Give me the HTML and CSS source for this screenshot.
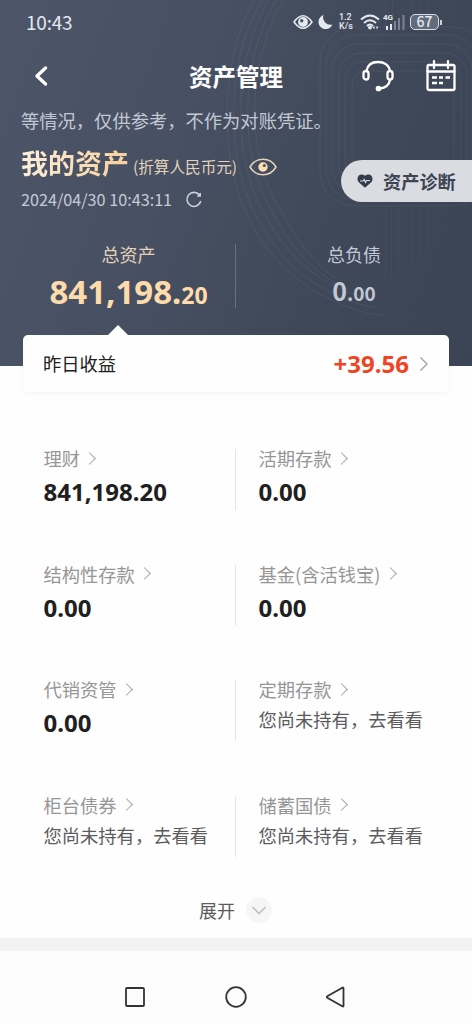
FILE: index.html
```html
<!DOCTYPE html>
<html lang="zh-CN">
<head>
<meta charset="utf-8">
<title>资产管理</title>
<link rel="stylesheet" href="styles.css">
</head>
<body>
<header class="hero">
  <svg class="hero-lines" width="472" height="366" viewBox="0 0 472 366" fill="none" stroke="#8592a5">
    <g stroke-opacity=".14">
      <path d="M255 0C222 50 215 160 252 225C280 276 330 309 386 316"/>
      <path d="M262 0C228 52 222 158 259 221C286 270 327 300 378 308"/>
      <path d="M269 0C235 54 229 156 266 217C290 260 322 286 365 298"/>
      <path d="M276 0C242 56 236 154 273 213C293 250 316 276 350 290"/>
      <path d="M283 0C249 58 243 152 280 209C298 242 314 264 338 280"/>
    </g>
    <g stroke-opacity=".13">
      <rect x="320" y="27" width="166" height="179" rx="34"/>
      <rect x="326" y="35" width="152" height="165" rx="30"/>
      <rect x="332" y="44" width="140" height="150" rx="26"/>
      <rect x="339" y="53" width="128" height="134" rx="22"/>
      <rect x="345" y="62" width="116" height="119" rx="18"/>
      <rect x="352" y="71" width="102" height="103" rx="14"/>
    </g>
    <path stroke-opacity=".08" d="M385.500 206V278M391.500 206V276M398.500 206V272M412.500 206V262M420.500 206V255M427.500 206V250M385.500 0V27M392.500 0V27M412.500 0V27M420.500 0V27M427.500 0V27"/>
  </svg>

  <div class="status">
    <span class="clock">10:43</span>
    <svg class="status-eye" width="20" height="16" viewBox="0 0 20 16"><path d="M1 8Q10-4.500 19 8Q10 20.500 1 8Z" fill="none" stroke="#e5e9f0" stroke-width="1.600"/><circle cx="10" cy="8" r="4.900" fill="#e5e9f0"/><circle cx="8.700" cy="6.800" r="1.700" fill="#485264"/></svg>
    <svg class="moon" width="15" height="16" viewBox="0 0 15 16"><path d="M5.500 1A7.200 7.200 0 1 0 14.400 10.500A7.400 7.400 0 0 1 5.500 1Z" fill="#e5e9f0"/></svg>
    <span class="speed"><span>1.2</span><span>K/s</span></span>
    <svg class="wifi" width="20" height="16" viewBox="0 0 20 16" fill="none" stroke="#e5e9f0" stroke-width="1.900"><path d="M1 5.500Q10-2.500 19 5.500M4 9Q10 3.500 16 9M6.800 12Q10 9.200 13 12"/><circle cx="10" cy="13.600" r="2" fill="#e5e9f0" stroke="none"/><path d="M12.500 13.500L14.500 11.700V15.300ZM18.500 13.500L16.500 11.700V15.300Z" fill="#e5e9f0" stroke="none"/></svg>
    <span class="signal"><span class="network">4G</span><svg width="22" height="16" viewBox="0 0 22 16" stroke-width="2"><path stroke="#e5e9f0" d="M4 12V16M8 10V16"/><path stroke="#7b8494" d="M12 7V16M16 4V16M20.500 1V16"/></svg></span>
    <span class="battery">67</span><i class="battery-tip"></i>
  </div>

  <div class="navbar">
    <svg class="back" width="14" height="20" viewBox="0 0 14 20"><path d="M11.500 2L3 10L11.500 18" fill="none" stroke="#fff" stroke-width="3.300" stroke-linecap="round" stroke-linejoin="round"/></svg>
    <h1>资产管理</h1>
    <svg class="headset" width="34" height="34" viewBox="0 0 34 34" fill="none" stroke="#fff" stroke-width="2.300" stroke-linecap="round"><path d="M5.500 12C6.500 6 11 3 17 3S28 6 29 12"/><rect x="2.500" y="12" width="5" height="8.500" rx="2.500"/><rect x="26.500" y="12" width="5" height="8.500" rx="2.500"/><path d="M29 21C28 26 24 29 19 29.500"/><circle cx="17.500" cy="29.500" r="1.700" fill="#fff"/></svg>
    <svg class="calendar" width="30" height="32" viewBox="0 0 30 32" fill="none" stroke="#fff" stroke-width="2.300"><rect x="1.500" y="5" width="27" height="25" rx="1.500"/><path d="M1.500 11.500H28.500M8 1V8M22 1V8" stroke-linecap="round"/><path d="M6 17.500H11M13 17.500H17M19.500 17.500H24M6 23H11M13 23H17"/></svg>
  </div>

  <p class="notice">等情况，仅供参考，不作为对账凭证。</p>
  <div class="asset-title">
    <h2>我的资产</h2><span class="unit">(折算人民币元)</span>
    <svg width="28" height="20" viewBox="0 0 28 20"><path d="M1 10C7 -.3 21 -.3 27 10C21 20.300 7 20.300 1 10Z" fill="none" stroke="#e6d3bb" stroke-width="1.500"/><circle cx="14" cy="10" r="4.700" fill="#ffdfaf"/><circle cx="15.300" cy="8.600" r="1.500" fill="#465062"/></svg>
  </div>
  <div class="updated"><span>2024/04/30 10:43:11</span>
    <svg width="18" height="18" viewBox="0 0 18 18"><path d="M14.800 4.500A7 7 0 1 0 15.800 10M15.200 2V5H12.200" fill="none" stroke="#cbd0da" stroke-width="1.600"/></svg>
  </div>
  <a class="diagnosis"><svg width="16" height="14" viewBox="0 0 16 14"><path d="M8 13.800L1.500 8C-1.500 4 2.500 -2 8 1.800C13.500-2 17.500 4 14.500 8Z" fill="#343b4b"/><path d="M3 7H6L7.200 5.500L8.500 8.500L9.700 6.500H13" fill="none" stroke="#dadce2" stroke-width="1.200"/></svg><span>资产诊断</span></a>

  <div class="totals">
    <div class="total total-assets"><span class="total-label">总资产</span><strong>841,198.<small>20</small></strong></div>
    <div class="total total-debt"><span class="total-label">总负债</span><strong>0<small>.00</small></strong></div>
  </div>
</header>

<main>
  <section class="income">
    <span class="income-label">昨日收益</span><strong>+39.56</strong>
    <svg width="10" height="16" viewBox="0 0 10 16"><path d="M1.500 1.500L8 8L1.500 14.500" fill="none" stroke="#a0a0a0" stroke-width="1.300"/></svg>
  </section>
  <section class="grid">
    <div class="item"><span class="name">理财<i></i></span><strong>841,198.20</strong></div>
    <div class="item"><span class="name">活期存款<i></i></span><strong>0.00</strong></div>
    <div class="item"><span class="name">结构性存款<i></i></span><strong>0.00</strong></div>
    <div class="item"><span class="name">基金(含活钱宝)<i></i></span><strong>0.00</strong></div>
    <div class="item"><span class="name">代销资管<i></i></span><strong>0.00</strong></div>
    <div class="item"><span class="name">定期存款<i></i></span><span class="empty">您尚未持有，去看看</span></div>
    <div class="item"><span class="name">柜台债券<i></i></span><span class="empty">您尚未持有，去看看</span></div>
    <div class="item"><span class="name">储蓄国债<i></i></span><span class="empty">您尚未持有，去看看</span></div>
  </section>
  <div class="expand"><span>展开</span><svg width="26" height="26" viewBox="0 0 26 26"><circle cx="13" cy="13" r="13" fill="#f6f6f6"/><path d="M6.500 10L13 16.500L19.500 10" fill="none" stroke="#c2c2c2" stroke-width="1.700"/></svg></div>
</main>
<nav class="system-nav">
  <svg width="22" height="22" viewBox="0 0 22 22"><rect x="2" y="2" width="18" height="18" rx="1"/></svg>
  <svg width="22" height="22" viewBox="0 0 22 22"><circle cx="11" cy="11" r="9.800"/></svg>
  <svg width="22" height="22" viewBox="0 0 22 22"><path d="M18.500 2.300V19.700Q18.500 21 17.300 20.300L2.300 11.800Q1.300 11 2.300 10.200L17.300 1.700Q18.500 1 18.500 2.300Z"/></svg>
</nav>
</body>
</html>
```
FILE: styles.css
```css
* { box-sizing: border-box; }
body {
  margin: 0;
  width: 472px;
  height: 1024px;
  overflow: hidden;
  background: #fefefe;
  font-family: "Noto Sans CJK SC", sans-serif;
  color: #202020;
}
h1, h2, p { margin: 0; }
svg { display: block; flex: none; }
span, strong { white-space: nowrap; }

.hero {
  position: relative;
  height: 366px;
  overflow: hidden;
  background: linear-gradient(110deg, #4c5668 0%, #475062 40%, #3f4858 70%, #3b4454 100%);
}
.hero-lines { position: absolute; left: 0; top: 0; }
.status, .navbar, .notice, .asset-title, .updated, .totals { position: relative; }

.status {
  height: 44px;
  display: flex;
  align-items: center;
  padding-left: 26px;
  color: #e5e9f0;
}
.clock { width: 267px; font-size: 19px; line-height: 44px; letter-spacing: -.2px; }
.moon { margin-left: 5px; }
.speed { display: flex; flex-direction: column; width: 16px; margin-left: 6px; font: 500 9px/9px Roboto, sans-serif; }
.speed span { height: 9px; overflow: hidden; }
.wifi { margin-left: 5px; }
.signal { position: relative; margin-left: 3px; width: 22px; }
.network { position: absolute; left: 0; top: -1px; font: 700 8px/9px Roboto, sans-serif; }
.battery {
  width: 29px;
  height: 16px;
  margin-left: 5px;
  border: 1.500px solid #d9dde5;
  border-radius: 5px;
  background: #626b7a;
  font: 500 14px/13px "Noto Sans CJK SC", sans-serif;
  text-align: center;
}
.battery-tip { width: 2px; height: 5px; margin-left: 1px; background: #cfd4dc; }

.navbar {
  display: flex;
  align-items: center;
  height: 64px;
  padding-left: 34px;
  color: #fff;
}
.navbar h1 { width: 94px; margin-left: 141px; font-size: 23.500px; line-height: 62px; font-weight: 700; }
.headset { margin-left: 78px; }
.calendar { margin: 0 0 0 31px; }

.notice { height: 26px; padding-left: 21px; font-size: 18.300px; line-height: 24px; color: #c2c8d3; white-space: nowrap; }
.asset-title { display: flex; align-items: center; height: 54px; padding-left: 21px; }
.asset-title h2 { margin-top: 4px; font-size: 27px; line-height: 50px; color: #ffdfb1; background: linear-gradient(100deg, #fff0dc, #f7cf99); -webkit-background-clip: text; -webkit-text-fill-color: transparent; }
.unit { margin: 10px 0 0 4px; font-size: 15.600px; line-height: 44px; color: #e4d1b9; }
.asset-title svg { margin: 11px 0 0 12px; }
.updated { display: flex; align-items: center; height: 22px; padding-left: 21px; font-size: 16.200px; line-height: 22px; color: #c5cbd5; }
.updated svg { margin: 2px 0 0 13px; }

.diagnosis {
  position: absolute;
  left: 341px;
  top: 160px;
  width: 131px;
  height: 42px;
  display: flex;
  align-items: center;
  padding-left: 16px;
  border-radius: 21px 0 0 21px;
  background: #dadce1;
  color: #3d4453;
  font-size: 18.200px;
  line-height: 42px;
  font-weight: 700;
}
.diagnosis span { margin-left: 10px; }

.totals { display: grid; grid-template-columns: 236px 236px; margin-top: 34px; height: 64px; }
.total { display: flex; flex-direction: column; align-items: center; height: 64px; }
.total-assets { padding-left: 22px; border-right: 1px solid #697180; color: #ffdbac; }
.total-label { font-size: 18px; line-height: 20px; }
.total strong { font-family: "Noto Sans", sans-serif; font-size: 33px; line-height: 56px; }
.total small { font-size: 23px; }
.total-debt { color: #c2c8d5; }
.total-debt strong { font-family: "Noto Sans CJK SC", sans-serif; font-size: 25px; line-height: 52px; }
.total-debt small { font-size: 19px; }
.total-assets .total-label { color: #e4d1b9; }

.income {
  position: relative;
  display: flex;
  align-items: center;
  width: 426px;
  height: 57px;
  margin: -31px 0 0 23px;
  padding: 0 20px;
  border-radius: 5px;
  background: #fefefe;
  box-shadow: 0 2px 5px rgba(0, 0, 0, .04);
}
.income::before {
  content: "";
  position: absolute;
  left: 85px;
  top: -10px;
  border: solid transparent;
  border-width: 0 10px 10px;
  border-bottom-color: #fefefe;
}
.income-label { flex: 1; font-size: 18.300px; line-height: 57px; }
.income strong { margin-right: 10px; color: #ef4423; font: 700 24px/57px "Noto Sans", sans-serif; }

.grid { display: grid; grid-template-columns: 192px 193px; grid-auto-rows: 115.500px; column-gap: 23px; margin: 55px 0 0 43.500px; }
.item { position: relative; display: flex; flex-direction: column; align-items: flex-start; }
.item:nth-child(odd)::after { content: ""; position: absolute; right: 0; top: 2px; width: 1px; height: 61px; background: #e5e5e5; }
.name { display: flex; align-items: center; height: 22px; color: #969696; font-size: 18.300px; line-height: 20px; }
.name i { width: 9px; height: 9px; margin-left: 5px; border: solid #a5a5a5; border-width: 1.200px 1.200px 0 0; transform: rotate(45deg); }
.item strong { font: 700 24px/32px "Noto Sans", sans-serif; margin-top: 7px; }
.empty { margin-top: 7px; font-size: 18.300px; line-height: 24px; color: #5c5c5c; }
.expand { display: flex; align-items: center; height: 30px; margin-top: -14px; padding-left: 199px; font-size: 18px; line-height: 30px; color: #5b5b5b; }
.expand svg { margin-left: 11px; }
.system-nav { display: flex; justify-content: space-between; height: 85px; margin-top: 13px; padding: 35px 125px 0 124px; border-top: 13px solid #f2f2f2; background: #fcfcfc; fill: none; stroke: #333; stroke-width: 1.800; }
```
